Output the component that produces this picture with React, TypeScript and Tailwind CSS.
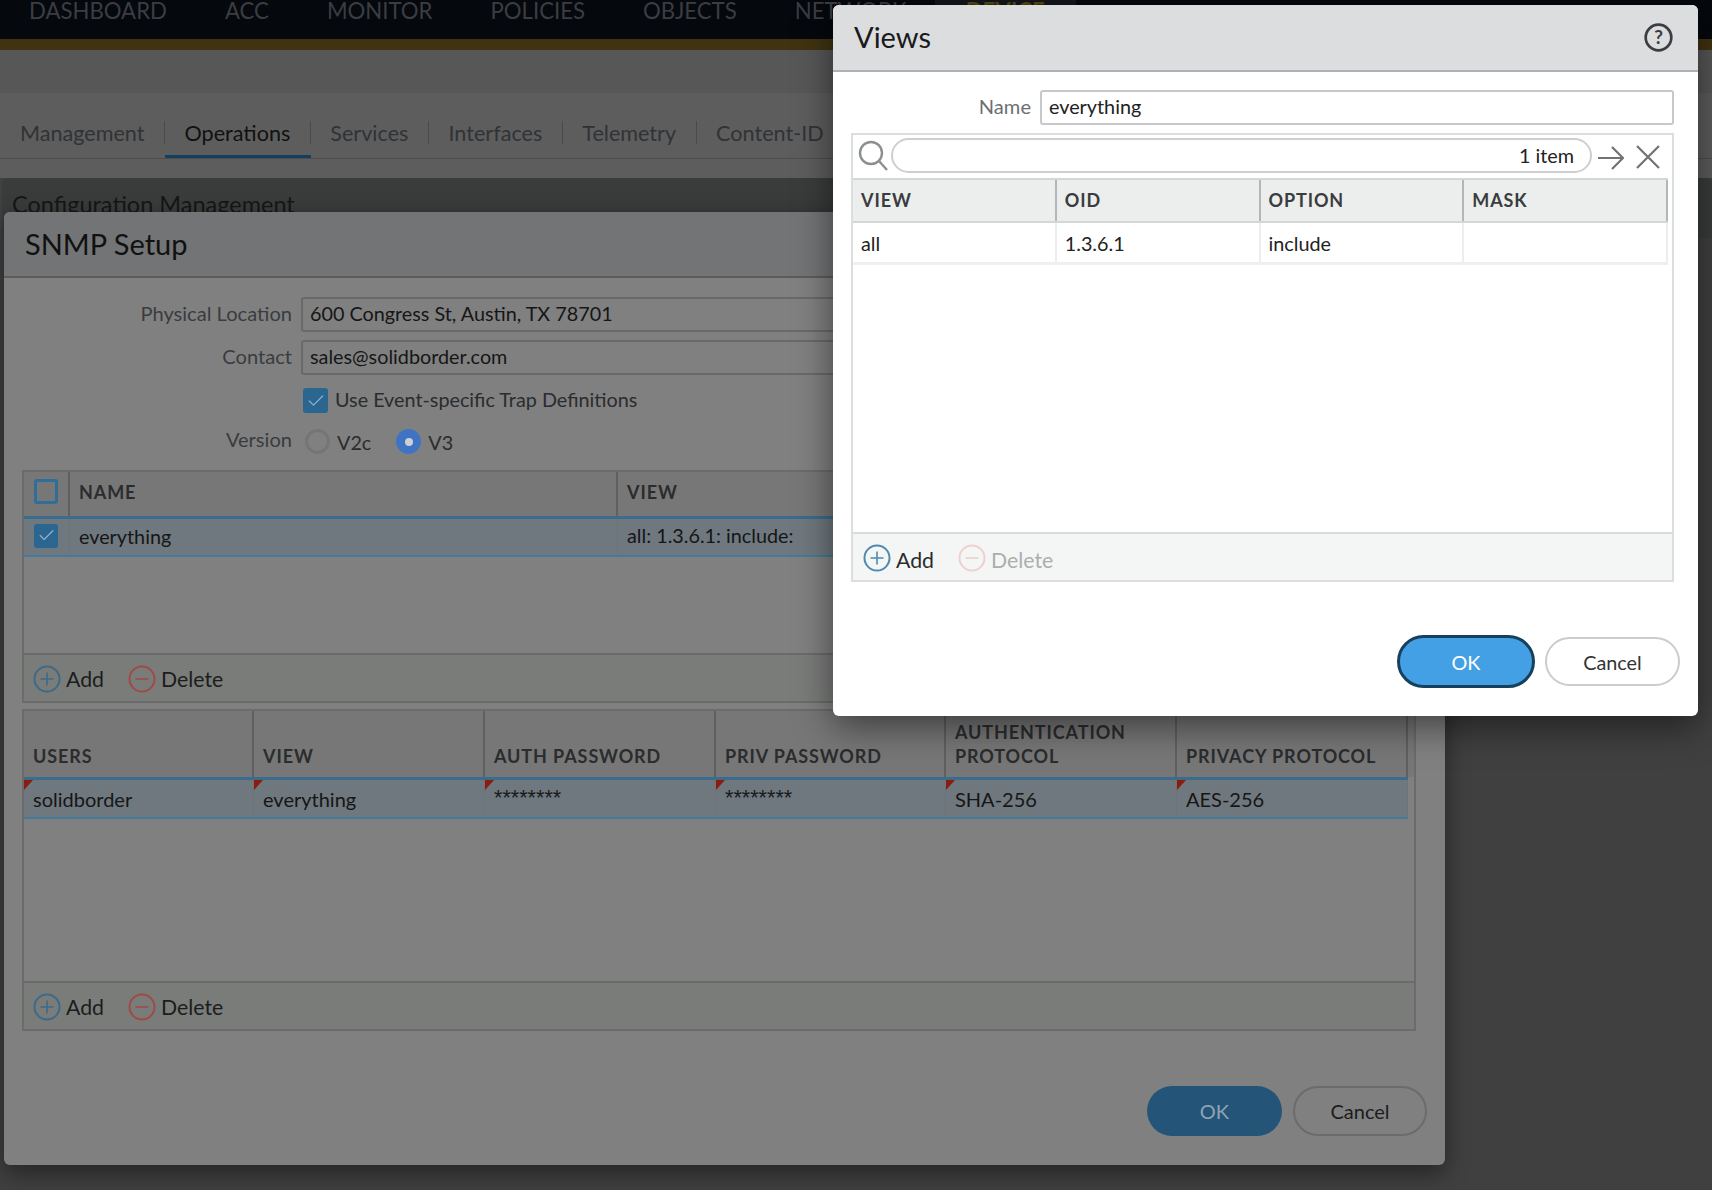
import { Check } from "lucide-react";

const navItems = ["DASHBOARD", "ACC", "MONITOR", "POLICIES", "OBJECTS", "NETWORK"];
const tabs = ["Management", "Operations", "Services", "Interfaces", "Telemetry", "Content-ID"];

const CircleIcon = ({ ring, mark, plus }: { ring: string; mark: string; plus?: boolean }) => (
  <svg width="28" height="28" viewBox="0 0 28 28" fill="none" className="shrink-0">
    <circle cx="14" cy="14" r="12.5" stroke={ring} strokeWidth="2" />
    <path d={plus ? "M14 7.5v13M7.5 14h13" : "M7.5 14h13"} stroke={mark} strokeWidth="1.6" />
  </svg>
);

const TableFooter = ({ dim }: { dim?: boolean }) => (
  <div
    className={`flex items-center pt-[1px] h-[48px] border-t-2 text-[21.3px] ${
      dim ? "pl-[9px] bg-[#7a7c7a] border-[#6b6b6b] text-[#1c1c1c]" : "pl-[10px] bg-[#f4f6f5] border-[#dadcdc] text-[#2c2c2c]"
    }`}
  >
    <CircleIcon ring={dim ? "#3d6a88" : "#4f89b0"} mark={dim ? "#3d6a88" : "#4f89b0"} plus />
    <span className={`ml-[5px] ${dim ? "mt-[3px]" : "mt-[7px]"}`}>Add</span>
    <div className="ml-[24px]">
      <CircleIcon ring={dim ? "#a04a48" : "#f0cfcf"} mark={dim ? "#a04a48" : "#f0cfcf"} />
    </div>
    <span className={`ml-[5px] ${dim ? "mt-[3px]" : "mt-[7px] text-[#adadad]"}`}>Delete</span>
  </div>
);

const HeadCell = ({ w, children }: { w: string; children: React.ReactNode }) => (
  <div className={`${w} h-full shrink-0 flex items-end px-[9px] pb-[9px] border-r-2 border-[#606060] text-[18px] leading-[24px] font-bold tracking-[0.9px] text-[#2a2c2e]`}>
    <span>{children}</span>
  </div>
);

const UserCell = ({ w, children, stars }: { w: string; children: React.ReactNode; stars?: boolean }) => (
  <div className={`${w} relative h-full shrink-0 px-[9px] border-r border-[#6c7478] ${stars ? "font-['Liberation_Sans',sans-serif] text-[21.6px] leading-[26px] pt-[5px] text-[#1a1a1a]" : "text-[20px] leading-[38px]"}`}>
    <div className="absolute left-0 top-0 w-0 h-0 border-t-[10px] border-r-[9px] border-t-[#8a1d0d] border-r-transparent" />
    {children}
  </div>
);

const SnmpDialog = () => (
  <div className="absolute left-[4px] top-[212px] w-[1441px] h-[953px] rounded-md bg-[#808080] shadow-[0_8px_24px_rgba(0,0,0,0.45)] text-[19.8px] text-[#161616]">
    <div className="h-[66px] flex items-center pl-[21px] rounded-t-md bg-[#737475] border-b-2 border-[#5c5c5c] text-[29px] text-[#111111]">
      SNMP Setup
    </div>

    <div className="px-[18px] pt-[19px]">
      <div className="flex items-center gap-[9px]">
        <label className="w-[270px] pb-[2px] text-right text-[20.1px] text-[#3a3c3f]">Physical Location</label>
        <div className="w-[1115px] h-[35px] pl-[7px] leading-[29px] border-2 border-[#696969] rounded-[3px]">600 Congress St, Austin, TX 78701</div>
      </div>
      <div className="flex items-center gap-[9px] mt-[8px]">
        <label className="w-[270px] pb-[2px] text-right text-[20.1px] text-[#3a3c3f]">Contact</label>
        <div className="w-[1115px] h-[35px] pl-[7px] leading-[29px] border-2 border-[#696969] rounded-[3px]">sales@solidborder.com</div>
      </div>
      <div className="flex items-center mt-[13px] ml-[281px] h-[25px]">
        <div className="w-[25px] h-[25px] rounded-[3px] bg-[#2b6690] flex items-center justify-center">
          <Check size={20} strokeWidth={1.5} className="text-[#8fb0c8]" />
        </div>
        <span className="ml-[7px] pb-[2px] text-[#2a2c2e]">Use Event-specific Trap Definitions</span>
      </div>
      <div className="flex mt-[16px] h-[25px]">
        <label className="w-[270px] text-right text-[20.1px] text-[#3a3c3f] leading-[20px]">Version</label>
        <div className="ml-[13px] flex items-center">
          <div className="w-[25px] h-[25px] rounded-full border-[3px] border-[#757575]" />
          <span className="ml-[7px] mt-[2px] text-[#2a2c2e]">V2c</span>
          <div className="ml-[25px] w-[25px] h-[25px] rounded-full bg-[#3f73c4] flex items-center justify-center">
            <div className="w-[8px] h-[8px] rounded-full bg-[#d0d0d0]" />
          </div>
          <span className="ml-[7px] mt-[2px] text-[#2a2c2e]">V3</span>
        </div>
      </div>

      <div className="mt-[16px] h-[233px] w-[1394px] border-2 border-[#6b6b6b] flex flex-col">
        <div className="h-[44px] flex bg-[#777777] shrink-0">
          <div className="w-[46px] h-full shrink-0 flex items-center pl-[10px] pb-[5px] border-r-2 border-[#606060]">
            <div className="w-[24px] h-[25px] rounded-[3px] border-[3px] border-[#2f6e99]" />
          </div>
          <div className="w-[548px] h-full shrink-0 flex items-center px-[9px] pb-[3px] border-r-2 border-[#606060] text-[18px] font-bold tracking-[0.9px] text-[#2a2c2e]">NAME</div>
          <div className="flex-1 flex items-center px-[9px] pb-[3px] text-[18px] font-bold tracking-[0.9px] text-[#2a2c2e]">VIEW</div>
        </div>
        <div className="h-[41px] flex items-center shrink-0 bg-[#6f787e] border-t-[3px] border-b-2 border-t-[#3a6c8e] border-b-[#447a9c]">
          <div className="w-[46px] h-full shrink-0 flex items-center pl-[10px] pb-[3px] border-r border-[#6c7478]">
            <div className="w-[24px] h-[24px] rounded-[3px] bg-[#2b6690] flex items-center justify-center">
              <Check size={19} strokeWidth={1.5} className="text-[#8fb0c8]" />
            </div>
          </div>
          <div className="w-[548px] h-full shrink-0 px-[9px] leading-[34px] border-r border-[#6c7478]">everything</div>
          <div className="px-[9px] pb-[2px]">all: 1.3.6.1: include:</div>
        </div>
        <div className="flex-1" />
        <TableFooter dim />
      </div>

      <div className="mt-[6px] h-[322px] w-[1394px] border-2 border-[#6b6b6b] flex flex-col">
        <div className="h-[66px] flex bg-[#777777] shrink-0">
          <HeadCell w="w-[230px]">USERS</HeadCell>
          <HeadCell w="w-[231px]">VIEW</HeadCell>
          <HeadCell w="w-[231px]">AUTH PASSWORD</HeadCell>
          <HeadCell w="w-[230px]">PRIV PASSWORD</HeadCell>
          <HeadCell w="w-[231px]">AUTHENTICATION<br />PROTOCOL</HeadCell>
          <HeadCell w="w-[231px]">PRIVACY PROTOCOL</HeadCell>
        </div>
        <div className="h-[42px] w-[1384px] flex shrink-0 bg-[#6f787e] border-t-[3px] border-b-2 border-t-[#3a6c8e] border-b-[#447a9c]">
          <UserCell w="w-[230px]">solidborder</UserCell>
          <UserCell w="w-[231px]">everything</UserCell>
          <UserCell w="w-[231px]" stars>********</UserCell>
          <UserCell w="w-[230px]" stars>********</UserCell>
          <UserCell w="w-[231px]">SHA-256</UserCell>
          <UserCell w="w-[231px]">AES-256</UserCell>
        </div>
        <div className="flex-1" />
        <TableFooter dim />
      </div>

      <div className="flex justify-end gap-[11px] mt-[55px] text-[20px]">
        <button className="w-[135px] h-[50px] rounded-full bg-[#245478] text-[#8fa5b5]">OK</button>
        <button className="w-[134px] h-[50px] rounded-full border-2 border-[#6b6b6b] text-[#1c1c1c]">Cancel</button>
      </div>
    </div>
  </div>
);

const ViewsDialog = () => {
  const cols = ["VIEW", "OID", "OPTION", "MASK"];
  const row = ["all", "1.3.6.1", "include", ""];
  return (
    <div className="absolute left-[833px] top-[5px] w-[865px] h-[711px] rounded-md bg-white shadow-[0_10px_36px_rgba(0,0,0,0.5)] text-[19.8px] text-[#222222]">
      <div className="h-[67px] flex items-center justify-between pl-[21px] pr-[25px] rounded-t-md bg-[#dcdddf] border-b-2 border-[#aeb2b6]">
        <span className="pb-[2px] text-[29px] text-[#1a1a1a]">Views</span>
        <svg width="29" height="29" viewBox="0 0 29 29" fill="none">
          <circle cx="14.5" cy="14.5" r="12.8" stroke="#3a3e42" strokeWidth="2.7" />
          <text x="14.5" y="21" textAnchor="middle" fontSize="19" fontWeight="700" fill="#3a3e42" fontFamily="Lato, sans-serif">?</text>
        </svg>
      </div>

      <div className="flex items-center mt-[18px] pl-[18px] pr-[24px]">
        <label className="w-[180px] pb-[2px] text-right text-[20.1px] text-[#6b6f73]">Name</label>
        <div className="ml-[9px] w-[634px] h-[35px] pl-[7px] leading-[29px] border-2 border-[#c6c8ca] rounded-[3px]">everything</div>
      </div>

      <div className="mt-[8px] mx-[18px] w-[823px] h-[449px] border-2 border-[#dcdddd] flex flex-col">
        <div className="h-[43px] shrink-0 flex items-start pt-[3px]">
          <svg width="31" height="32" viewBox="0 0 31 32" fill="none" className="ml-[5px] mt-[2px]">
            <circle cx="13" cy="13" r="11" stroke="#8b8f92" strokeWidth="2.4" />
            <path d="M21 21l8 9" stroke="#8b8f92" strokeWidth="2.4" />
          </svg>
          <div className="ml-[2px] w-[701px] h-[35px] rounded-full border-2 border-[#cdcfd0] flex items-center justify-end pr-[16px]">1 item</div>
          <svg width="26" height="26" viewBox="0 0 26 26" fill="none" className="ml-[6px] mt-[7px]">
            <path d="M0 13h25M14 2l11 11-11 11" stroke="#6f7376" strokeWidth="2.2" />
          </svg>
          <svg width="24" height="24" viewBox="0 0 24 24" fill="none" className="ml-[12px] mt-[7px]">
            <path d="M1 1l22 22M23 1L1 23" stroke="#6f7376" strokeWidth="2.2" />
          </svg>
        </div>
        <div className="h-[45px] shrink-0 flex w-[815px] bg-[#eceeed] border-y-2 border-[#d4d6d8]">
          {cols.map((c) => (
            <div key={c} className="w-[204px] flex items-center px-[8px] border-r-2 border-[#b2b6b8] text-[18px] font-bold tracking-[0.9px] text-[#3a3c3e]">
              {c}
            </div>
          ))}
        </div>
        <div className="h-[42px] shrink-0 flex w-[815px] border-b-[3px] border-[#eef0f0]">
          {row.map((c, i) => (
            <div key={i} className="w-[204px] flex items-center px-[8px] pt-[3px] border-r-2 border-[#eceeee]">
              {c}
            </div>
          ))}
        </div>
        <div className="flex-1" />
        <TableFooter />
      </div>

      <div className="flex justify-end gap-[10px] mt-[53px] pr-[18px]">
        <button className="w-[138px] h-[53px] pt-[2px] rounded-full bg-[#44a0e4] border-[3px] border-[#17405c] text-white">OK</button>
        <button className="w-[135px] h-[49px] mt-[2px] pt-[2px] rounded-full border-2 border-[#cccccc] text-[#333333]">Cancel</button>
      </div>
    </div>
  );
};

export default function App() {
  return (
    <div className="relative w-[1712px] h-[1190px] overflow-hidden bg-[#404040] font-['Lato',sans-serif]">
      <div className="h-[39px] flex gap-[58px] pl-[29px] bg-[#05080d] text-[22.2px] leading-[22px] text-[#3b3d42]">
        {navItems.map((n) => (
          <span key={n}>{n}</span>
        ))}
        <span className="-ml-[30px] px-[31px] h-full bg-[#15171c] text-[#5a4a10] font-bold">DEVICE</span>
      </div>
      <div className="h-[11px] bg-[#403310]" />
      <div className="h-[43px] bg-[#575757]" />
      <div className="h-[85px] bg-[#5d5d5d]">
        <div className="flex h-[66px] border-b border-[#4e4e4e] text-[21.6px]">
          {tabs.map((t, i) => (
            <div key={t} className={`pt-[28px] pb-[11px] h-[65px] border-b-[3px] ${i === 1 ? "border-[#14405f] text-[#111111]" : "border-transparent text-[#303336]"}`}>
              <div className={`${i < 2 ? "pl-[20px]" : "pl-[19px]"} ${i === 0 ? "pr-[19px]" : "pr-[20px]"} h-[23px] leading-[25px] border-r border-[#4a4a4a]`}>{t}</div>
            </div>
          ))}
        </div>
      </div>
      <div className="h-[60px] ml-[2px] pl-[10px] pt-[9px] rounded-t-md bg-[#3a3c3c] text-[23.5px] text-[#161616]">Configuration Management</div>

      <SnmpDialog />
      <ViewsDialog />
    </div>
  );
}
